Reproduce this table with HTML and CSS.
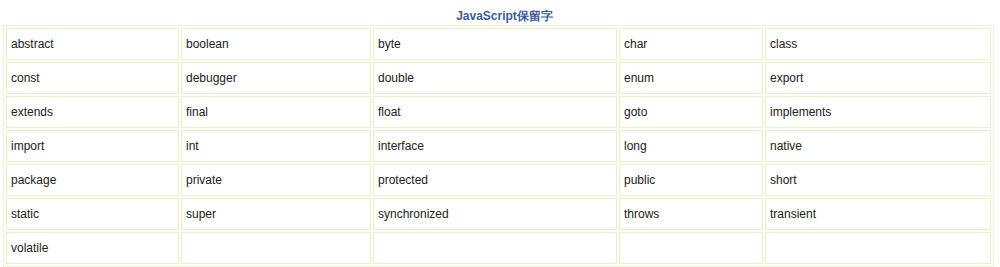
FILE: index.html
```html
<!DOCTYPE html>
<html>
<head>
<meta charset="utf-8">
<link rel="stylesheet" href="styles.css">
</head>
<body>
<div class="wrap">
  <div class="title">JavaScript保留字</div>
  <table class="kw">
    <tr><td class="c1">abstract</td><td class="c2">boolean</td><td class="c3">byte</td><td class="c4">char</td><td class="c5">class</td></tr>
    <tr><td>const</td><td>debugger</td><td>double</td><td>enum</td><td>export</td></tr>
    <tr><td>extends</td><td>final</td><td>float</td><td>goto</td><td>implements</td></tr>
    <tr><td>import</td><td>int</td><td>interface</td><td>long</td><td>native</td></tr>
    <tr><td>package</td><td>private</td><td>protected</td><td>public</td><td>short</td></tr>
    <tr><td>static</td><td>super</td><td>synchronized</td><td>throws</td><td>transient</td></tr>
    <tr><td>volatile</td><td></td><td></td><td></td><td></td></tr>
  </table>
</div>
</body>
</html>
```
FILE: styles.css
```css
html, body {
  margin: 0;
  padding: 0;
  background: #ffffff;
}
.wrap {
  padding: 0 0 0 3px;
  width: 991px;
  font-family: "Liberation Sans", Arial, sans-serif;
  font-size: 12px;
  color: #222222;
}
.title {
  height: 25px;
  line-height: 32px;
  text-align: center;
  font-weight: bold;
  color: #3b5c9c;
  font-size: 12px;
  padding-left: 12px;
  box-sizing: border-box;
}
.kw {
  width: 991px;
  table-layout: fixed;
  border-collapse: separate;
  border-spacing: 2px;
  border: 1px solid #f1f0d6;
}
.kw td {
  box-sizing: border-box;
  height: 32px;
  padding: 0 0 0 4px;
  border: 1px solid #efeecb;
  vertical-align: middle;
  white-space: nowrap;
}
.kw td.c1 { width: 173px; }
.kw td.c2 { width: 190px; }
.kw td.c3 { width: 244px; }
.kw td.c4 { width: 144px; }
.kw td.c5 { width: 226px; }
```
